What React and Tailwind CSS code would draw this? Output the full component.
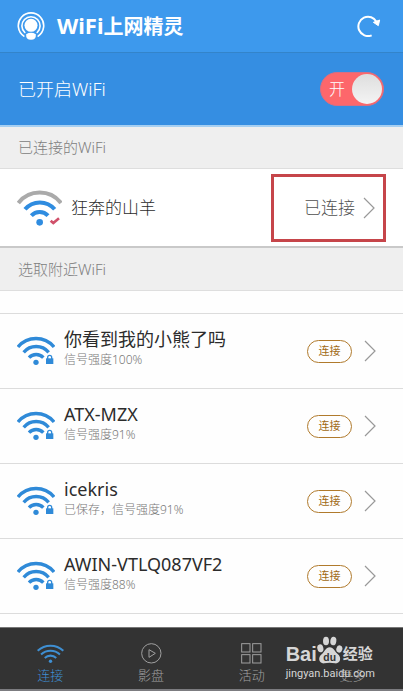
const networks = [
  { name: '你看到我的小熊了吗', info: '信号强度100%' },
  { name: 'ATX-MZX', info: '信号强度91%' },
  { name: 'icekris', info: '已保存，信号强度91%' },
  { name: 'AWIN-VTLQ087VF2', info: '信号强度88%' },
]

function LogoIcon() {
  return (
    <svg viewBox="0 0 84 86" className="w-7 h-7 shrink-0" fill="none" stroke="#fff" strokeWidth="5" strokeLinecap="round">
      <path d="M20 74A39 39 0 1 1 64 74" />
      <path d="M23 63A28 28 0 1 1 61 63" />
      <circle cx="42" cy="41" r="20" fill="#fff" stroke="none" />
      <path d="M27 68Q42 60 57 68Q58 85 42 85Q26 85 27 68Z" fill="#fff" stroke="none" />
    </svg>
  )
}

function RefreshIcon() {
  return (
    <svg viewBox="0 0 72 66" className="w-6 h-[22px]" fill="none">
      <path d="M44 61A29 29 0 1 1 59 21" stroke="#fff" strokeWidth="6" />
      <path d="M49 22L68 15L64 32Z" fill="#fff" stroke="#fff" strokeWidth="3" strokeLinejoin="round" />
    </svg>
  )
}

function ConnectedIcon() {
  return (
    <svg viewBox="50 194 135 108" className="w-[45px] h-9 shrink-0" fill="none" strokeWidth="12">
      <path d="M54 233A81 81 0 0 1 182 233" stroke="#aaa" />
      <path d="M74 252A58 58 0 0 1 163 252" stroke="#2f8ce0" />
      <path d="M93 271A34 34 0 0 1 143 271" stroke="#2f8ce0" />
      <circle cx="118" cy="291" r="10" fill="#2f8ce0" stroke="none" />
      <path d="M151 286L159 293L176 279" stroke="#d0506a" strokeWidth="8" />
    </svg>
  )
}

function LockedWifiIcon() {
  return (
    <svg viewBox="51 141 114 90" className="w-[38px] h-[30px] shrink-0" fill="none" stroke="#2f8ad8" strokeWidth="10">
      <path d="M54 174A70 70 0 0 1 162 174" />
      <path d="M71 190A49 49 0 0 1 146 190" />
      <path d="M87 206A29 29 0 0 1 130 206" />
      <circle cx="108" cy="220" r="8" fill="#2f8ad8" stroke="none" />
      <rect x="138" y="208" width="22" height="17" fill="#2f8ad8" stroke="none" />
      <path d="M143 210V205Q143 199 149 199Q155 199 155 205V210" strokeWidth="4" />
    </svg>
  )
}

function Chevron() {
  return (
    <svg viewBox="0 0 12 22" className="w-3 h-[22px] shrink-0" fill="none" stroke="#999" strokeWidth="1.2">
      <path d="M1 1L11 11L1 21" />
    </svg>
  )
}

function NavWifiIcon() {
  return (
    <svg viewBox="110 128 80 62" className="w-[27px] h-[21px]" fill="none" stroke="#3f8fd2" strokeWidth="6">
      <path d="M112 151A56 56 0 0 1 188 151" />
      <path d="M122 162A41 41 0 0 1 178 162" />
      <path d="M133 172A25 25 0 0 1 167 172" />
      <circle cx="150" cy="182" r="5" fill="#3f8fd2" stroke="none" />
    </svg>
  )
}

function NavPlayIcon() {
  return (
    <svg viewBox="0 0 63 63" className="w-[21px] h-[21px]" fill="none" stroke="#a0a0a0" strokeWidth="3">
      <circle cx="31" cy="31" r="29" />
      <path d="M24 20L43 31L24 43Z" />
    </svg>
  )
}

function NavGridIcon() {
  return (
    <svg viewBox="0 0 63 63" className="w-[21px] h-[21px]" fill="none" stroke="#a0a0a0" strokeWidth="3">
      <rect x="2" y="2" width="25" height="25" />
      <rect x="35" y="2" width="25" height="25" />
      <rect x="2" y="35" width="25" height="25" />
      <rect x="35" y="35" width="25" height="25" />
    </svg>
  )
}

function PawIcon() {
  return (
    <svg viewBox="0 0 78 84" className="w-[26px] h-7 shrink-0" fill="#d6d6d6">
      <ellipse cx="10" cy="37" rx="9" ry="12" transform="rotate(-15 10 37)" />
      <ellipse cx="27" cy="15" rx="9" ry="13" />
      <ellipse cx="49" cy="15" rx="9" ry="13" transform="rotate(8 49 15)" />
      <ellipse cx="67" cy="39" rx="9" ry="11" transform="rotate(15 67 39)" />
      <path d="M38 34C50 34 53 47 62 54C75 64 70 84 54 82C44 80 32 80 22 82C6 84 1 65 14 55C24 47 26 34 38 34Z" />
      <text x="38" y="75" textAnchor="middle" fontSize="31" fontWeight="700" fontFamily="Liberation Sans, sans-serif" fill="#333">du</text>
    </svg>
  )
}

function Watermark() {
  return (
    <div className="absolute right-7 top-2 flex flex-col items-start font-['Roboto','Noto_Sans_CJK_SC',sans-serif] text-[#d6d6d6] pointer-events-none">
      <div className="flex items-end">
        <span className="font-['Liberation_Sans',sans-serif] text-[20px] leading-5 font-bold">Bai</span>
        <PawIcon />
        <span className="text-[15px] leading-5 font-bold">经验</span>
      </div>
      <span className="text-[11px] leading-5 font-normal">jingyan.baidu.com</span>
    </div>
  )
}

function NavItem({ icon, label, active }) {
  return (
    <a href="#" className={`flex-1 flex flex-col items-center pt-[15px] gap-[3px] ${active ? 'text-[#3f8fd2]' : 'text-[#a0a0a0]'}`}>
      <span className="h-[21px] flex items-center">{icon}</span>
      <span className="text-[13px] leading-4">{label}</span>
    </a>
  )
}

export default function App() {
  return (
    <div className="min-h-screen flex flex-col bg-[#fefefe] font-['Noto_Sans','Noto_Sans_CJK_SC',sans-serif] font-light">
      <header className="h-[53px] flex items-center justify-between pl-[17px] pr-[22px] bg-[#3d99ed] border-b border-[#3384ca]">
        <div className="flex items-center gap-3">
          <LogoIcon />
          <h1 className="text-white text-[20px] leading-7 font-bold"><span className="text-[22px]">WiFi</span>上网精灵</h1>
        </div>
        <button type="button" aria-label="刷新">
          <RefreshIcon />
        </button>
      </header>

      <label className="h-[74px] flex items-center justify-between pl-[18px] pr-[19px] bg-[#358ee2] border-b-2 border-[#a5cff2]">
        <span className="text-white text-[18px]">已开启WiFi</span>
        <input type="checkbox" defaultChecked className="peer sr-only" />
        <span className="w-16 h-[34px] rounded-full bg-[#fd676b] border border-[#d66f83] flex items-center justify-between pl-2 pr-px">
          <span className="text-white text-[16px]">开</span>
          <span className="w-[30px] h-[30px] rounded-full bg-linear-to-b from-[#dedede] to-[#f4f4f4]"></span>
        </span>
      </label>

      <h2 className="h-[42px] flex items-center pl-[18px] bg-[#efefef] border-b border-[#dedede] text-[#808080] text-[15px]">已连接的WiFi</h2>
      <div className="h-[79px] flex items-center pl-[17px] pr-[17px] bg-white border-b-2 border-[#c9c9c9]">
        <ConnectedIcon />
        <span className="flex-1 pl-[9px] text-[#2c2c2c] text-[17px]">狂奔的山羊</span>
        <button type="button" className="w-[115px] h-[68px] flex items-center justify-end gap-2 pr-2 border-3 border-[#c6454a] text-[#505050] text-[17px]">
          已连接
          <Chevron />
        </button>
      </div>

      <h2 className="h-[43px] flex items-center pl-[18px] bg-[#efefef] border-b border-[#dedede] text-[#808080] text-[15px]">选取附近WiFi</h2>
      <ul className="pt-[22px] pb-[13px]">
        {networks.map((net) => (
          <li key={net.name} className="h-[75px] flex items-center pl-[17px] pr-[27px] border-t border-[#dcdcdc] last:border-b last:h-[76px]">
            <LockedWifiIcon />
            <div className="flex-1 pl-[9px] pb-1.5">
              <p className="text-[#2c2c2c] text-[18px] leading-6 font-normal">{net.name}</p>
              <p className="text-[#787878] text-[12px] leading-[18px]">{net.info}</p>
            </div>
            <button type="button" className="w-[45px] h-[23px] mr-3 rounded-full border border-[#b07a2c] text-[#a06a14] text-[11px] font-normal flex items-center justify-center">连接</button>
            <Chevron />
          </li>
        ))}
      </ul>

      <nav className="relative mt-auto h-16 flex bg-[#333] border-t border-[#777] border-b-2 border-b-[#7c7c80]">
        <NavItem icon={<NavWifiIcon />} label="连接" active />
        <NavItem icon={<NavPlayIcon />} label="影盘" />
        <NavItem icon={<NavGridIcon />} label="活动" />
        <NavItem label="更多" />
        <Watermark />
      </nav>
    </div>
  )
}
